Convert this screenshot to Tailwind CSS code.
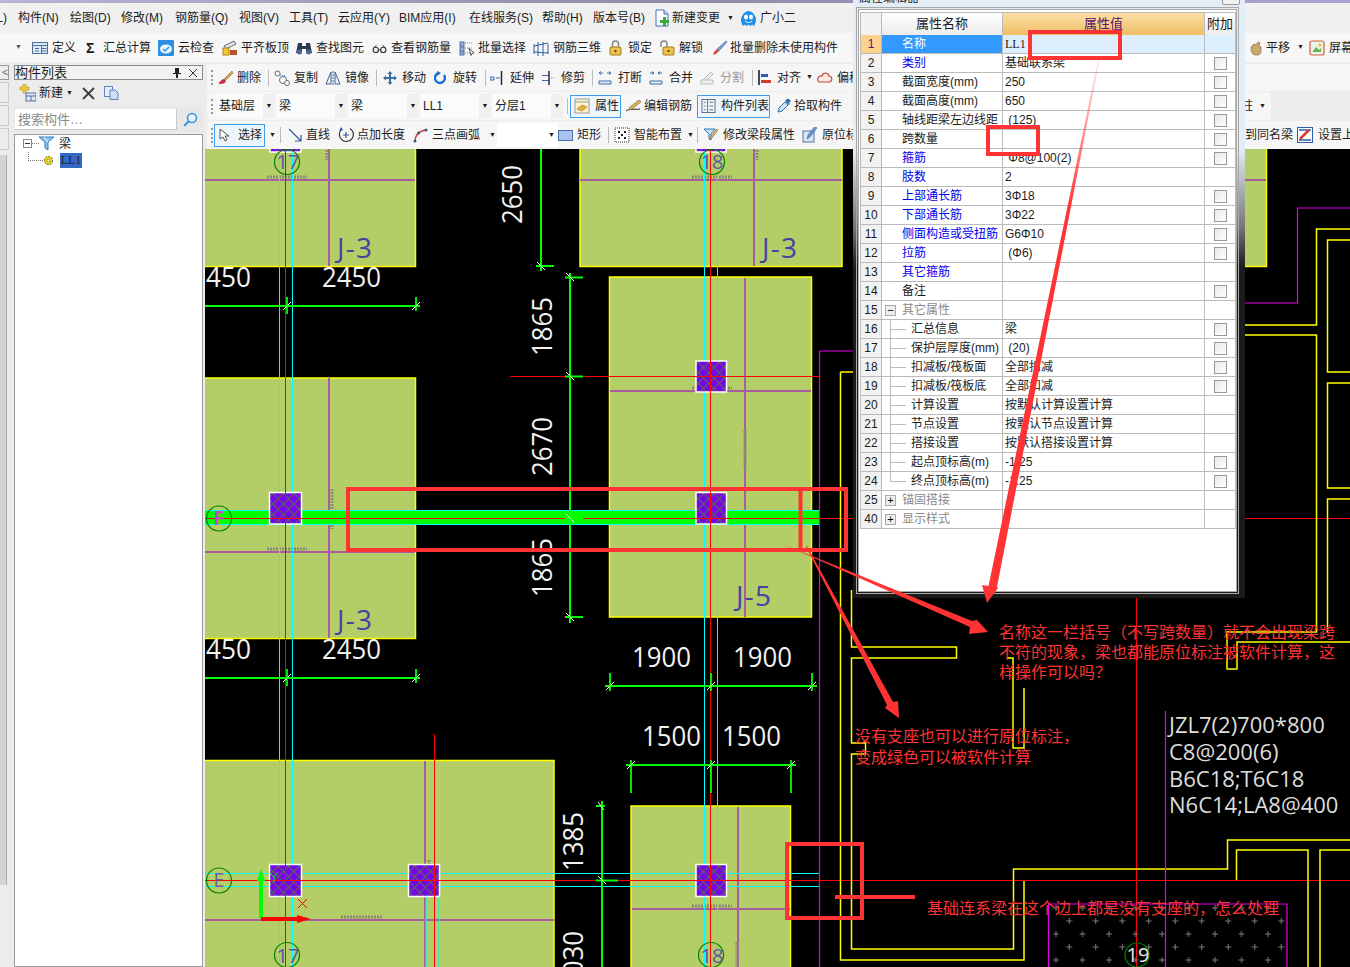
<!DOCTYPE html>
<html lang="zh-CN">
<head>
  <meta charset="UTF-8" />
  <title>构件列表</title>
  <script src="https://cdn.jsdelivr.net/npm/@tailwindcss/browser@4"></script>
</head>
<body class="overflow-hidden">
<div class="relative w-[1350px] h-[967px] overflow-hidden flex flex-col bg-[#ececec] text-[12px] text-[#1c1c1c] whitespace-nowrap font-['Liberation_Sans','Noto_Sans_CJK_SC',sans-serif]">

  <!-- 标题栏残留 -->
  <div class="h-[3px] bg-gradient-to-r from-[#b9b3d6] via-[#8f8aa8] to-[#a9a4d2]"></div>

  <!-- 菜单 -->
  <div class="h-[30px] flex items-center bg-[#f0f0f0] *:shrink-0">
    <span class="w-[7px] mr-[11px] flex justify-end">L)</span>
    <span class="w-[52px]">构件(N)</span>
    <span class="w-[51px]">绘图(D)</span>
    <span class="w-[54px]">修改(M)</span>
    <span class="w-[64px]">钢筋量(Q)</span>
    <span class="w-[50px]">视图(V)</span>
    <span class="w-[49px]">工具(T)</span>
    <span class="w-[61px]">云应用(Y)</span>
    <span class="w-[70px]">BIM应用(I)</span>
    <span class="w-[73px]">在线服务(S)</span>
    <span class="w-[51px]">帮助(H)</span>
    <span class="w-[61px]">版本号(B)</span>
    <svg class="w-[16px] h-[18px] mr-[2px]" viewBox="0 0 16 18"><path d="M2 1h8l4 4v12H2z" fill="#fff" stroke="#3f6fb5"/><path d="M10 1v4h4" fill="#cfe0f5" stroke="#3f6fb5"/><path d="M9 8h3v3h3v3h-3v3H9v-3H6v-3h3z" fill="#3aa83a"/></svg>
    <span class="w-[55px]">新建变更</span>
    <span class="w-[13px] text-[7px]">▼</span>
    <svg class="w-[17px] h-[17px] mr-[3px]" viewBox="0 0 17 17"><path d="M3 16c-2-3-2.500-7-1.500-9C3 3 6 1 8.500 1S14 3 15.500 7c1 2 .5 6-1.500 9l-2-1.500-1.500 1.500-2-1.500-2 1.500-1.500-1.500z" fill="#1e8fe6"/><ellipse cx="6" cy="7" rx="2" ry="2.500" fill="#fff"/><ellipse cx="11" cy="7" rx="2" ry="2.500" fill="#fff"/><path d="M5 11c2 2 5 2 7 0" stroke="#fff" fill="none"/></svg>
    <span>广小二</span>
  </div>

  <!-- 工具栏一 -->
  <div class="h-[29px] flex items-center bg-[#f7f7f7] *:shrink-0">
    <span class="w-[32px] pl-[15px] text-[7px] text-[#555]">▼</span>
    <div class="w-[54px] flex items-center gap-1"><svg class="w-4 h-4" viewBox="0 0 16 16"><rect x=".5" y="2.500" width="15" height="11" fill="#dfe9f7" stroke="#4f719e"/><path d="M1 5.500h14M9.500 5.500v8M9.500 8.500h5M9.500 11h5M3 8.500h4M3 11h4" stroke="#4f719e"/></svg><span>定义</span></div>
    <div class="w-[72px] flex items-center gap-[7px]"><span class="w-[10px] text-[14px] font-bold leading-none">Σ</span><span>汇总计算</span></div>
    <div class="w-[64px] flex items-center gap-1"><svg class="w-4 h-4" viewBox="0 0 16 16"><rect width="16" height="16" rx="1" fill="#2d8fe3"/><ellipse cx="8" cy="9" rx="6" ry="4.500" fill="#eaf5ff"/><path d="M5 9l2 2 4-4" stroke="#2d8fe3" stroke-width="1.500" fill="none"/></svg><span>云检查</span></div>
    <div class="w-[74px] flex items-center gap-[3px]"><svg class="w-4 h-4" viewBox="0 0 16 16"><path d="M2 6l10-5 2 3L4 9z" fill="#dfe4ea" stroke="#667"/><rect x="1" y="8" width="6" height="7" fill="#f2c93a" stroke="#a8811a"/><rect x="8" y="10" width="7" height="5" fill="#b5532a"/></svg><span>平齐板顶</span></div>
    <div class="w-[76px] flex items-center gap-1"><svg class="w-4 h-4" viewBox="0 0 16 16"><path d="M2 3h4v3h4V3h4l2 10h-6V9H6v4H0z" fill="#2c3a52"/><circle cx="3.500" cy="12" r="2.500" fill="#4e6a94"/><circle cx="12.500" cy="12" r="2.500" fill="#4e6a94"/></svg><span>查找图元</span></div>
    <div class="w-[87px] flex items-center gap-[4px]"><svg class="w-[15px] h-4" viewBox="0 0 16 16"><circle cx="4" cy="10" r="2.800" fill="none" stroke="#333" stroke-width="1.200"/><circle cx="12" cy="10" r="2.800" fill="none" stroke="#333" stroke-width="1.200"/><path d="M7 10h2M1.500 8L5 5M14.500 8L11 5" stroke="#333"/></svg><span>查看钢筋量</span></div>
    <div class="w-[74px] flex items-center gap-[3px]"><svg class="w-4 h-4" viewBox="0 0 16 16"><rect x="1" y="2" width="4" height="4" fill="#9bb6db" stroke="#4f719e"/><rect x="1" y="7" width="4" height="4" fill="#9bb6db" stroke="#4f719e"/><rect x="1" y="12" width="4" height="3" fill="#9bb6db" stroke="#4f719e"/><path d="M6 3h8M6 8h8M6 13h5" stroke="#888" stroke-dasharray="1 1"/><path d="M10 8l5 5-2 .5-1 2z" fill="#fff" stroke="#555"/></svg><span>批量选择</span></div>
    <div class="w-[76px] flex items-center gap-1"><svg class="w-4 h-4" viewBox="0 0 16 16"><path d="M1 4v10M5 2v14M10 2v14M15 4v10M1 6l14-3M1 12l14 1" stroke="#2e5d9e" fill="none"/></svg><span>钢筋三维</span></div>
    <div class="w-[51px] flex items-center gap-[6px]"><svg class="w-[13px] h-4" viewBox="0 0 13 16"><path d="M3.500 7V4a3 3 0 016 0v3" fill="none" stroke="#888" stroke-width="1.500"/><rect x="1" y="7" width="11" height="8" rx="1" fill="#f0c24a" stroke="#a07c1c"/><circle cx="6.500" cy="11" r="1.200" fill="#6a4f0c"/></svg><span>锁定</span></div>
    <div class="w-[52px] flex items-center gap-[4px]"><svg class="w-[15px] h-4" viewBox="0 0 15 16"><path d="M1 7V4a3 3 0 016 0v3" fill="none" stroke="#888" stroke-width="1.500"/><rect x="3" y="7" width="11" height="8" rx="1" fill="#f0c24a" stroke="#a07c1c"/><circle cx="8.500" cy="11" r="1.200" fill="#6a4f0c"/></svg><span>解锁</span></div>
    <div class="w-[536px] flex items-center gap-[2px]"><svg class="w-4 h-4" viewBox="0 0 16 16"><path d="M14 1l1 1-8 9-2-2z" fill="#7da2d6" stroke="#3e5f91" stroke-width=".6"/><path d="M5 9l2 2-3 3-3 1 1-3z" fill="#e0473c"/></svg><span>批量删除未使用构件</span></div>
    <div class="w-[61px] flex items-center gap-[2px]"><svg class="w-4 h-4" viewBox="0 0 16 16"><path d="M3 9c0-3 2-5 4-5l1 1 2-3 2 1-1 3 2 1v5c0 2-2 3-4 3H7c-2 0-4-3-4-6z" fill="#c9a86a" stroke="#7a6232" stroke-width=".6"/></svg><span>平移</span><span class="ml-[5px] text-[7px]">▼</span></div>
    <div class="flex items-center gap-1"><svg class="w-4 h-4" viewBox="0 0 16 16"><rect x="1" y="1" width="14" height="14" rx="2" fill="#e9f4ea" stroke="#d35a3d" stroke-width="1.200"/><path d="M4 11l3-4 3 3 2-2v4H4z" fill="#68b04a"/><circle cx="11" cy="5" r="1.500" fill="#f2b62d"/></svg><span>屏幕</span></div>
  </div>

  <div class="flex-1 flex">
    <!-- 左侧 -->
    <div class="w-[205px] flex">
      <div class="w-[11px] flex flex-col text-[#666]">
        <div class="mt-[3px] h-[15px] w-[9px] border-y border-r border-[#999] flex items-center justify-end text-[10px]">&lt;</div>
        <div class="mt-[2px] h-[21px] w-[9px] border-y border-r border-[#ccc]"></div>
        <div class="mt-[2px] h-[21px] w-[9px] border-y border-r border-[#ccc]"></div>
        <div class="mt-[2px] h-[22px] w-[9px] border-y border-r border-[#ccc]"></div>
        <div class="mt-[5px] h-[730px] w-[7px] bg-[#d4d4d4] border-r border-[#aaa]"></div>
      </div>
      <div class="ml-[3px] w-[189px] flex flex-col">
        <div class="mt-[3px] h-[15px] flex items-center justify-between pr-[5px] border border-[#8a8a8a] bg-[#f2f2f2] text-[13px] leading-[12px]">
          <span>构件列表</span>
          <span class="flex items-center gap-[8px]">
            <svg class="w-[8px] h-[10px]" viewBox="0 0 8 10"><path d="M2 0h4v5h2v1H5v4H3V6H0V5h2z" fill="#222"/></svg>
            <svg class="w-[8px] h-[8px]" viewBox="0 0 8 8"><path d="M0 0l8 8M8 0L0 8" stroke="#333"/></svg>
          </span>
        </div>
        <div class="h-[26px] flex items-center pl-[5px]">
          <svg class="w-[17px] h-[18px]" viewBox="0 0 17 18"><path d="M4 0h3v3h3v3H7v3H4V6H1V3h3z" fill="#eec93a" stroke="#a88a1a" stroke-width=".5"/><rect x="7" y="9" width="10" height="8" fill="#dfe9f7" stroke="#4f719e"/><path d="M7 12h10M12 12v5" stroke="#4f719e"/></svg>
          <span class="ml-[3px]">新建</span>
          <span class="ml-[3px] text-[7px]">▼</span>
          <svg class="ml-[9px] w-[13px] h-[13px]" viewBox="0 0 13 13"><path d="M1 1l11 11M12 1L1 12" stroke="#3c3c3c" stroke-width="1.800"/></svg>
          <svg class="ml-[9px] w-[15px] h-[14px]" viewBox="0 0 15 14"><rect x=".5" y=".5" width="8" height="10" fill="#e6eefa" stroke="#5e86bd"/><path d="M6 4h5l3 3v6.500H6z" fill="#cfdff5" stroke="#5e86bd"/></svg>
        </div>
        <div class="h-[26px] flex items-center bg-[#e8e8e8] pl-[1px]">
          <div class="w-[162px] h-[21px] bg-white border-b border-r border-[#c8c8c8] text-[13px] leading-[21px] pl-[3px] text-[#8a8a8a]">搜索构件…</div>
          <svg class="ml-[6px] w-[15px] h-[15px]" viewBox="0 0 15 15"><circle cx="9" cy="6" r="4.500" fill="#e6f3ff" stroke="#3b97dd" stroke-width="1.600"/><path d="M6 9l-5 5" stroke="#3b97dd" stroke-width="2"/></svg>
        </div>
        <div class="mt-[2px] flex-1 bg-white border border-[#999] pl-[8px]">
          <div class="h-[17px] flex items-center">
            <span class="w-[9px] h-[9px] border border-[#8a8a8a] flex items-center justify-center"><i class="block w-[5px] h-px bg-[#333]"></i></span>
            <span class="w-[7px] border-t border-dotted border-[#777]"></span>
            <svg class="w-[15px] h-[15px]" viewBox="0 0 15 15"><path d="M0 1h15L9 6v8L6 12V6z" fill="#8fc3ee" stroke="#2e7fc2"/><path d="M5 1l4 5" stroke="#fff"/></svg>
            <span class="ml-[5px]">梁</span>
          </div>
          <div class="h-[17px] flex items-center pl-[5px]">
            <span class="w-[15px] h-[9px] -mt-[9px] border-l border-b border-dotted border-[#777]"></span>
            <svg class="w-[11px] h-[11px]" viewBox="0 0 11 11"><circle cx="5.500" cy="5.500" r="4" fill="#f4e21c" stroke="#4a4a10" stroke-dasharray="2 1"/><circle cx="5.500" cy="5.500" r="1.500" fill="#fff" stroke="#4a4a10" stroke-width=".6"/></svg>
            <span class="ml-[6px] w-[22px] h-[15px] bg-[#316ac5] text-center leading-[15px] font-['Liberation_Serif',serif]">LL1</span>
          </div>
        </div>
      </div>
    </div>

    <!-- 右侧 -->
    <div class="w-[1145px] flex flex-col">
      <!-- 编辑工具 -->
      <div class="mt-[2px] ml-[2px] h-[27px] pl-[4px] flex items-center bg-[#f6f6f6] rounded-l-[3px] *:shrink-0">
        <i class="w-[2px] h-[15px] mr-[4px] border-l-2 border-dotted border-[#999]"></i>
        <div class="w-[51px] flex items-center gap-1"><svg class="w-4 h-4" viewBox="0 0 16 16"><path d="M15 1l-8 8 1 2 8-8z" fill="#d6a258" stroke="#7a5626" stroke-width=".5"/><path d="M7 9c-3 0-3 3-6 4 3 2 7 1 8-2z" fill="#c8324a"/></svg><span>删除</span></div>
        <i class="w-px h-4 mr-[5px] bg-[#bbb]"></i>
        <div class="w-[51px] flex items-center gap-1"><svg class="w-4 h-4" viewBox="0 0 16 16"><circle cx="3.500" cy="3.500" r="2.500" fill="#fff" stroke="#666"/><circle cx="9" cy="10" r="3.500" fill="#fff" stroke="#666"/><circle cx="13" cy="13" r="2.500" fill="#fff" stroke="#666"/><path d="M6 5l6 1" stroke="#3b7fd0" stroke-dasharray="1 1"/></svg><span>复制</span></div>
        <div class="w-[51px] flex items-center gap-1"><svg class="w-4 h-4" viewBox="0 0 16 16"><path d="M6 2v12H1zM10 2v12h5z" fill="#eef3fa" stroke="#3f5f8a"/><path d="M8 1v14" stroke="#3f5f8a" stroke-dasharray="2 1"/></svg><span>镜像</span></div>
        <i class="w-px h-4 mr-[6px] bg-[#bbb]"></i>
        <div class="w-[51px] flex items-center gap-[5px]"><svg class="w-[14px] h-[14px]" viewBox="0 0 14 14"><path d="M7 0l2.500 3H8v3h3V4.500L14 7l-3 2.500V8H8v3h1.500L7 14l-2.500-3H6V8H3v1.500L0 7l3-2.500V6h3V3H4.500z" fill="#3e6ea8"/></svg><span>移动</span></div>
        <div class="w-[51px] flex items-center gap-[7px]"><svg class="w-[12px] h-[14px]" viewBox="0 0 12 14"><path d="M10 4a5 5 0 11-5-2" fill="none" stroke="#1f6fd0" stroke-width="2.400"/><path d="M3 0l4 2-4 3z" fill="#1f6fd0"/></svg><span>旋转</span></div>
        <i class="w-px h-4 mr-[4px] bg-[#bbb]"></i>
        <div class="w-[52px] flex items-center gap-[7px]"><svg class="w-[13px] h-[14px]" viewBox="0 0 13 14"><path d="M0 6h4v3H0zM6 7h4" stroke="#3e6ea8" fill="#d3e2f5"/><path d="M11.500 0v14" stroke="#222" stroke-width="1.400"/></svg><span>延伸</span></div>
        <div class="w-[50px] flex items-center gap-[6px]"><svg class="w-[13px] h-[14px]" viewBox="0 0 13 14"><path d="M0 4.500h7M0 9.500h7" stroke="#3e6ea8"/><path d="M7 0v14" stroke="#222" stroke-width="1.400"/><path d="M9 7h4" stroke="#888" stroke-dasharray="1 1"/></svg><span>修剪</span></div>
        <i class="w-px h-4 mr-[5px] bg-[#bbb]"></i>
        <div class="w-[51px] flex items-center gap-[6px]"><svg class="w-[14px] h-[14px]" viewBox="0 0 14 14"><path d="M1 10h12v3H1z" fill="#e2ecf8" stroke="#3e6ea8"/><path d="M5 2H1l2-1.500M1 2l2 1.500M9 2h4l-2-1.500M13 2l-2 1.500" stroke="#3e6ea8" fill="none"/></svg><span>打断</span></div>
        <div class="w-[51px] flex items-center gap-[6px]"><svg class="w-[14px] h-[14px]" viewBox="0 0 14 14"><path d="M1 10h12v3H1z" fill="#e2ecf8" stroke="#3e6ea8"/><path d="M1 2h4L3 .5M5 2L3 3.500M13 2H9l2-1.500M9 2l2 1.500" stroke="#3e6ea8" fill="none"/></svg><span>合并</span></div>
        <div class="w-[52px] flex items-center gap-[6px] text-[#9a9a9a]"><svg class="w-[14px] h-[14px]" viewBox="0 0 14 14"><path d="M1 13h12V9H1zM3 9l8-8 2 2-6 6" fill="#eee" stroke="#bbb"/></svg><span>分割</span></div>
        <i class="w-px h-4 mr-[5px] bg-[#bbb]"></i>
        <div class="w-[59px] flex items-center gap-[5px]"><svg class="w-[14px] h-[15px]" viewBox="0 0 14 15"><path d="M1 0v15" stroke="#123" stroke-width="1.600"/><rect x="3" y="4" width="7" height="3" fill="#2a5fb0"/><rect x="3" y="10" width="10" height="3" fill="#d23b2f"/></svg><span>对齐</span><span class="text-[7px]">▼</span></div>
        <div class="flex items-center gap-[4px]"><svg class="w-4 h-4" viewBox="0 0 16 16"><path d="M2 12c-3-3 0-7 3-6 1-4 6-4 7 0 3 0 4 4 1 6z" fill="#fbe9e4" stroke="#c0483a" stroke-width="1.200"/></svg><span>偏移</span></div>
      </div>
      <!-- 选择栏 -->
      <div class="mt-px ml-[2px] h-[28px] w-[1064px] pl-[4px] flex items-center bg-[#f6f6f6] rounded-[3px] *:shrink-0">
        <i class="w-[2px] h-[15px] mr-[4px] border-l-2 border-dotted border-[#999]"></i>
        <div class="w-[46px] h-[24px] pl-[2px] leading-[24px] bg-[#fbfbfb]">基础层</div><div class="w-[12px] h-[24px] mr-[2px] flex items-center justify-center text-[7px] bg-[#f0f0f0]">▼</div>
        <div class="w-[58px] h-[24px] pl-[2px] leading-[24px] bg-[#fbfbfb]">梁</div><div class="w-[12px] h-[24px] mr-[2px] flex items-center justify-center text-[7px] bg-[#f0f0f0]">▼</div>
        <div class="w-[58px] h-[24px] pl-[2px] leading-[24px] bg-[#fbfbfb]">梁</div><div class="w-[12px] h-[24px] mr-[2px] flex items-center justify-center text-[7px] bg-[#f0f0f0]">▼</div>
        <div class="w-[58px] h-[24px] pl-[2px] leading-[24px] bg-[#fbfbfb]">LL1</div><div class="w-[12px] h-[24px] mr-[2px] flex items-center justify-center text-[7px] bg-[#f0f0f0]">▼</div>
        <div class="w-[58px] h-[24px] pl-[2px] leading-[24px] bg-[#fbfbfb]">分层1</div><div class="w-[12px] h-[24px] mr-[4px] flex items-center justify-center text-[7px] bg-[#f0f0f0]">▼</div>
        <i class="w-px h-4 mr-[2px] bg-[#bbb]"></i>
        <div class="w-[51px] h-[23px] mr-[4px] flex items-center gap-[5px] pl-[3px] border border-[#3d9ef0] bg-[#edf5fd]"><svg class="w-4 h-4" viewBox="0 0 16 16"><rect x="1" y="1" width="14" height="14" fill="#fff3d0" stroke="#999"/><path d="M1 4h14" stroke="#999"/><path d="M3 11l5-4 5 2-5 4z" fill="#eab23c" stroke="#a6761a" stroke-width=".6"/></svg><span>属性</span></div>
        <div class="w-[72px] flex items-center gap-[3px]"><svg class="w-4 h-4" viewBox="0 0 16 16"><path d="M1 13c4-3 8-1 14-2" stroke="#222" fill="none"/><path d="M14 2l2 2-9 7-3 1 1-3z" fill="#e2b061" stroke="#7a5626" stroke-width=".6"/></svg><span>编辑钢筋</span></div>
        <div class="w-[73px] h-[23px] mr-[6px] flex items-center gap-[5px] pl-[3px] border border-[#3d9ef0] bg-[#edf5fd]"><svg class="w-4 h-4" viewBox="0 0 16 16"><rect x="1" y="1" width="14" height="14" fill="none" stroke="#667"/><path d="M7 1v14M3 4h2M3 8h2M3 12h2M9 4h4M9 8h4M9 12h4" stroke="#667"/></svg><span>构件列表</span></div>
        <div class="flex items-center gap-[2px]"><svg class="w-4 h-4" viewBox="0 0 16 16"><path d="M2 14l1-4 6-6 3 3-6 6z" fill="#cfe4f7" stroke="#2e6fb0"/><path d="M9 3l2-2c1-1 3 1 4 2l-2 2 1 1-1 1-4-4z" fill="#2e6fb0"/></svg><span>拾取构件</span></div>
        <div class="ml-auto mr-[5px] flex items-center gap-[6px]"><span>柱</span><span class="text-[7px]">▼</span></div>
      </div>
      <!-- 绘图工具 -->
      <div class="mt-px ml-[2px] h-[28px] pl-[4px] flex items-center bg-[#f6f6f6] rounded-l-[3px] *:shrink-0">
        <i class="w-[2px] h-[15px] mr-px border-l-2 border-dotted border-[#999]"></i>
        <div class="w-[51px] h-[23px] flex items-center gap-[7px] pl-[4px] border border-[#3d9ef0] bg-[#edf5fd]"><svg class="w-[12px] h-[14px]" viewBox="0 0 12 14"><path d="M1 1v10l3-2 2 4 2-1-2-4h4z" fill="#fff" stroke="#555"/></svg><span>选择</span></div>
        <div class="w-[15px] text-center text-[7px]">▼</div>
        <i class="w-px h-4 mr-[6px] bg-[#bbb]"></i>
        <div class="w-[51px] flex items-center gap-[3px]"><svg class="w-4 h-4" viewBox="0 0 16 16"><path d="M2 2l12 12M14 8v6H8" stroke="#2b5c96" stroke-width="1.200" fill="none"/></svg><span>直线</span></div>
        <div class="w-[75px] flex items-center gap-[3px]"><svg class="w-4 h-4" viewBox="0 0 16 16"><path d="M4 2a7 7 0 108-.5" stroke="#333" stroke-width="1.200" fill="none"/><path d="M3 0l2 3-3.500.5z" fill="#2b5c96"/><path d="M8 5v6M5 8h6" stroke="#2b5c96" stroke-width="1.200"/></svg><span>点加长度</span></div>
        <div class="w-[84px] flex items-center gap-[3px]"><svg class="w-4 h-4" viewBox="0 0 16 16"><path d="M2 15c0-7 4-11 11-12" stroke="#d0492f" stroke-width="1.400" fill="none"/><circle cx="2" cy="14" r="1.500" fill="#2b5c96"/><circle cx="5.500" cy="6" r="1.500" fill="#2b5c96"/><circle cx="13" cy="3" r="1.500" fill="#2b5c96"/></svg><span>三点画弧</span><span class="ml-[6px] text-[7px]">▼</span></div>
        <div class="w-[61px] h-[24px] flex items-center justify-end pr-[3px] text-[7px] bg-white">▼</div>
        <div class="w-[50px] flex items-center gap-[4px]"><svg class="w-[15px] h-[11px]" viewBox="0 0 15 11"><rect x=".5" y=".5" width="14" height="10" fill="#a9c3ec" stroke="#4a6fae"/></svg><span>矩形</span></div>
        <i class="w-px h-4 mr-[5px] bg-[#bbb]"></i>
        <div class="w-[83px] flex items-center gap-[4px]"><svg class="w-4 h-4" viewBox="0 0 16 16"><rect x="1" y="1" width="14" height="14" fill="#fff" stroke="#333" stroke-dasharray="1 1"/><path d="M4 4h2v2H4zM10 4h2v2h-2zM7 7h2v2H7zM4 10h2v2H4zM10 10h2v2h-2z" fill="#222"/></svg><span>智能布置</span><span class="ml-px text-[7px]">▼</span></div>
        <i class="w-px h-4 mr-[5px] bg-[#bbb]"></i>
        <div class="w-[99px] flex items-center gap-[4px]"><svg class="w-4 h-4" viewBox="0 0 16 16"><path d="M1 2h11L8 7v6L6 12V7z" fill="#bfe0f5" stroke="#2e7fb2"/><path d="M15 3l-6 8-2 1 .5-2 6-8z" fill="#e2b061" stroke="#7a5626" stroke-width=".5"/></svg><span>修改梁段属性</span></div>
        <div class="w-[443px] flex items-center gap-[4px]"><svg class="w-4 h-4" viewBox="0 0 16 16"><rect x="1" y="4" width="11" height="11" fill="#dbe6f5" stroke="#4f719e"/><path d="M15 1l-7 9-3 2 1-4 7-9z" fill="#6a94cf" stroke="#3e5f91" stroke-width=".5"/></svg><span>原位标注</span></div>
        <div class="w-[52px]">到同名梁</div>
        <div class="flex items-center gap-[5px]"><svg class="w-4 h-4" viewBox="0 0 16 16"><rect x=".5" y=".5" width="15" height="15" fill="#fff" stroke="#2a5fa8"/><path d="M2 3h12M2 13h12" stroke="#2a5fa8" stroke-width="1.500"/><path d="M3 12L12 3" stroke="#d8382f" stroke-width="2.500"/></svg><span>设置上</span></div>
      </div>

      <!-- 绘图区 -->
      <svg class="block w-[1145px] h-[818px] bg-black" viewBox="205 149 1145 818">
        <defs>
          <pattern id="hatch" patternUnits="userSpaceOnUse" width="10.500" height="10.500">
            <rect width="10.500" height="10.500" fill="#7a00f0"/>
            <path d="M0 0l10.500 10.500M10.500 0L0 10.500" stroke="#4c7a36" stroke-width="1"/>
          </pattern>
          <pattern id="plus" patternUnits="userSpaceOnUse" x="1056" y="915" width="26.500" height="26">
            <path d="M13.250 3v6M10.250 6h6M0 16v6M-3 19h6M26.500 16v6M23.500 19h6" stroke="#7c7c7c" fill="none"/>
          </pattern>
        </defs>

        <!-- 独立基础 -->
        <g fill="#b3cd67" stroke="#ffff00" stroke-width="1.500">
          <rect x="204" y="140" width="211.500" height="126.500"/>
          <rect x="580" y="140" width="262" height="126.500"/>
          <rect x="1200" y="140" width="66.500" height="126.500"/>
          <rect x="204" y="378" width="211.500" height="260.500"/>
          <rect x="609.500" y="277" width="202" height="340"/>
          <rect x="204" y="760.500" width="350" height="220"/>
          <rect x="631" y="806" width="159.500" height="170"/>
        </g>
        <g stroke="#aa5ca0" stroke-width="2" fill="none">
          <path d="M205 180h210M329 149v117"/>
          <path d="M580 180h262M754 149v117M1200 180h66"/>
          <path d="M205 552h210M329 378v260"/>
          <path d="M610 391h201M745 278v339"/>
          <path d="M205 920h349M425 761v206"/>
          <path d="M632 909h158M738 807v160"/>
        </g>
        <!-- 小字标注 -->
        <g stroke="#8b8b78" stroke-width="3" stroke-dasharray="2 1" fill="none">
          <path d="M267 177h40M692 177h40M267 549h40M692 388h40M341 917h42M692 906h40"/>
          <path d="M327 150v10M757 150v10M332 489v40M745 430v40M429 860v30M737 942v25"/>
        </g>

        <!-- 连系梁 -->
        <rect x="205" y="511" width="614" height="13" fill="#00ff00"/>
        <path d="M205 510.500h614M205 524.500h614" stroke="#00ffff"/>

        <!-- 轴线 -->
        <g stroke="#00ffff" fill="none">
          <path d="M279.500 149v818M292.500 149v818M704.500 149v818M717.500 149v818"/>
          <path d="M205 873.500h614M205 886.500h614"/>
          <path d="M426 897v70M439 897v70"/>
        </g>
        <!-- 柱 -->
        <g fill="url(#hatch)" stroke="#ffffff" stroke-width="1.500">
          <rect x="270" y="140" width="31" height="12"/>
          <rect x="696" y="140" width="30" height="12"/>
          <rect x="269.500" y="492.500" width="32" height="31.500"/>
          <rect x="696" y="361" width="30.500" height="31"/>
          <rect x="696" y="492.500" width="30.500" height="31.500"/>
          <rect x="269.500" y="864.500" width="32" height="32"/>
          <rect x="408.500" y="864.500" width="31" height="32"/>
          <rect x="696" y="864.500" width="30.500" height="32"/>
        </g>
        <g stroke="#ff0000" fill="none">
          <path d="M285.500 149v818M710.500 149v818M434.500 734v233M1136.500 597v370"/>
          <path d="M205 518.500h1145M205 880.500h1145M510 376.500h310"/>
        </g>

        <!-- 基础外围线 -->
        <g stroke="#ffff00" stroke-width="1.500" fill="none">
          <path d="M840.500 372h20M840.500 372v588h183.500v-79"/>
          <path d="M851.500 590v57h105v11h-105v85h14v11h-14v195h162v-80h214v-29h125"/>
          <path d="M1007 658h6v90h11v-60"/>
          <path d="M1236.500 880v-30h71.500v120M1320 970V850h35"/>
          <path d="M1240 325h76.500v-96h40M1240 335h76.500v297h-89.500v37h10v-27h120"/>
          <path d="M1350 240h-22.500v132h30M1350 383h-22.500v105h30M1350 499h-22.500v133"/>
        </g>
        <g stroke="#e600e6" stroke-width="1.200" fill="none">
          <path d="M819.500 351v620M819.500 351h40"/>
          <path d="M1240 303h57.500v-95h60"/>
          <path d="M1165.500 711v260"/>
          <path d="M1048.500 970v-66h238.500v66"/>
        </g>
        <rect x="1049" y="905" width="237" height="62" fill="url(#plus)"/>

        <!-- 尺寸线 -->
        <g stroke="#00ff00" stroke-width="2" fill="none">
          <path d="M541 149v122M570 273v350M205 306h215M205 678h215M605 686h212M626 765h170M602 801v166"/>
          <path d="M536 266h18M565 277.500h18M565 376.500h18M565 518h18M565 617h18M596 806h9M596 880.500h22"/>
          <path stroke-width="1.800" d="M287 297v17M416 297v14M287 669v17M416 669v14M610 673v18M711 673v18M812 673v18M631 760v33M711 760v33M791 760v33"/>
        </g>
        <g stroke="#ffffff" fill="none">
          <path d="M537 262l8 8M566 273l8 8M566 372l8 8M566 514l8 8M566 613l8 8M598 802l6 8M598 876l8 8"/>
          <path d="M283 310l8-8M412 310l8-8M283 682l8-8M412 682l8-8M606 690l8-8M707 690l8-8M808 690l8-8M627 769l8-8M707 769l8-8M787 769l8-8"/>
        </g>

        <!-- 轴号 -->
        <g stroke="#008000" stroke-width="1.200" fill="none">
          <circle cx="287" cy="162" r="12.500"/><circle cx="712" cy="162" r="12.500"/>
          <circle cx="219" cy="518.500" r="12.500"/><circle cx="219" cy="880.500" r="12.500"/>
          <circle cx="287" cy="955" r="12.500"/><circle cx="711" cy="955" r="12.500"/>
          <circle cx="1137" cy="955" r="12"/>
        </g>
        <g fill="#5a55a8" font-family="Open Sans" font-size="20" text-anchor="middle">
          <text x="288" y="169">17</text><text x="712" y="169">18</text>
          <text x="219" y="887" fill="#6d62a0">E</text>
          <text x="288" y="963">17</text><text x="712" y="963">18</text>
        </g>
        <text x="219" y="525" font-family="Open Sans" font-size="20" text-anchor="middle" fill="#c04fc0" font-weight="700">F</text>
        <text x="1138" y="962" font-family="Open Sans" font-size="20" text-anchor="middle" fill="#e8e8e8">19</text>

        <g fill="#4b3fa3" font-family="Open Sans" font-size="28">
          <text x="337" y="258" textLength="35" lengthAdjust="spacing">J-3</text><text x="762" y="258" textLength="35" lengthAdjust="spacing">J-3</text>
          <text x="337" y="630" textLength="35" lengthAdjust="spacing">J-3</text><text x="736" y="606" textLength="35" lengthAdjust="spacing">J-5</text>
        </g>

        <!-- 尺寸文字 -->
        <g fill="#f2f2f2" font-family="Open Sans" font-size="28">
          <text x="206" y="287" textLength="45" lengthAdjust="spacingAndGlyphs">450</text>
          <text x="322" y="287" textLength="59" lengthAdjust="spacingAndGlyphs">2450</text>
          <text x="206" y="659" textLength="45" lengthAdjust="spacingAndGlyphs">450</text>
          <text x="322" y="659" textLength="59" lengthAdjust="spacingAndGlyphs">2450</text>
          <text x="632" y="667" textLength="59" lengthAdjust="spacingAndGlyphs">1900</text>
          <text x="733" y="667" textLength="59" lengthAdjust="spacingAndGlyphs">1900</text>
          <text x="642" y="746" textLength="59" lengthAdjust="spacingAndGlyphs">1500</text>
          <text x="722" y="746" textLength="59" lengthAdjust="spacingAndGlyphs">1500</text>
          <text transform="translate(522,224) rotate(-90)" textLength="59" lengthAdjust="spacingAndGlyphs">2650</text>
          <text transform="translate(552,356) rotate(-90)" textLength="59" lengthAdjust="spacingAndGlyphs">1865</text>
          <text transform="translate(552,476) rotate(-90)" textLength="59" lengthAdjust="spacingAndGlyphs">2670</text>
          <text transform="translate(552,597) rotate(-90)" textLength="59" lengthAdjust="spacingAndGlyphs">1865</text>
          <text transform="translate(583,871) rotate(-90)" textLength="59" lengthAdjust="spacingAndGlyphs">1385</text>
          <text transform="translate(583,990) rotate(-90)" textLength="59" lengthAdjust="spacingAndGlyphs">2030</text>
        </g>
        <g fill="#dddddd" font-family="Open Sans" font-size="22">
          <text x="1169" y="733">JZL7(2)700*800</text>
          <text x="1169" y="760">C8@200(6)</text>
          <text x="1169" y="787">B6C18;T6C18</text>
          <text x="1169" y="813">N6C14;LA8@400</text>
        </g>

        <!-- 坐标轴 -->
        <path d="M261 918v-40" stroke="#00ff00" stroke-width="4"/>
        <path d="M257 881l4-12 4 12z" fill="#00ff00"/>
        <path d="M261 919h36" stroke="#ff0000" stroke-width="4"/>
        <path d="M297 915l14 4-14 4z" fill="#ff0000"/>
        <path d="M298 899l9 9M307 899l-9 9" stroke="#ff0000"/>
        <path d="M270 873l4 4 4-5M274 877v5" stroke="#00ff00" fill="none"/>
      </svg>
    </div>
  </div>

  <!-- 属性编辑器 -->
  <div class="absolute z-10 top-0 left-[853px] w-[392px] h-[598px] overflow-hidden bg-gradient-to-b from-[#e3edf7] from-[25%] via-[#777] via-[38%] to-[#1a1a1a] to-[45%]">
    <span class="absolute top-[-11px] left-[6px] text-[12px]">属性编辑器</span>
    <div class="absolute top-[-10px] right-[5px] w-[18px] h-[15px] bg-[#f2f2f2] border border-[#999] rounded-[2px]"></div>
    <div class="mt-[7px] ml-[3px] w-[383px] h-[587px] border border-[#a8a8a8] p-px">
      <div class="h-full border border-[#a8a8a8] bg-white pl-px pt-[2px]">
        <div class="w-[376px] border-l border-t border-[#bbb]">
          <div class="grid grid-cols-[21px_121px_202px_31px] h-[22px] leading-[22px] text-center text-[13px]">
            <div class="border-r border-b border-[#bbb] bg-[#f2f2f2]"></div>
            <div class="border-r border-b border-[#bbb] bg-gradient-to-b from-white to-[#ececec]">属性名称</div>
            <div class="border-r border-b border-[#bbb] bg-gradient-to-b from-[#fbdfa6] to-[#f0be63] text-[#5b1070]">属性值</div>
            <div class="border-r border-b border-[#bbb] bg-gradient-to-b from-white to-[#ececec]">附加</div>
          </div>
          <div id="rows"></div>
        </div>
      </div>
    </div>
  </div>

  <!-- 红色批注 -->
  <svg class="absolute z-20 inset-0 w-[1350px] h-[967px] pointer-events-none" viewBox="0 0 1350 967">
    <defs>
      <linearGradient id="fade" gradientUnits="userSpaceOnUse" x1="0" y1="60" x2="0" y2="210">
        <stop offset="0" stop-color="#ff3333" stop-opacity=".1"/>
        <stop offset="1" stop-color="#ff3333"/>
      </linearGradient>
    </defs>
    <g fill="none" stroke="#ff3333" stroke-width="4">
      <rect x="1030" y="32" width="90" height="26"/>
      <rect x="988" y="127" width="50" height="27"/>
      <rect x="348" y="489" width="498" height="61"/>
      <path d="M800.500 489v61"/>
      <rect x="787" y="844" width="75" height="74"/>
      <path d="M835 897h80"/>
    </g>
    <polygon points="1098,60 1099.500,60 997,587 998,588 987,603 982,585 988.500,586" fill="url(#fade)"/>
    <polygon points="780,543 972,621 977,620 988,632 969,634 970,627" fill="#ff3333"/>
    <polygon points="806,547 807,546 893,702 898,701 899,718 885,708 887,705" fill="#ff3333"/>
    <g fill="#ff3333" font-size="16" font-family="Noto Sans CJK SC">
      <text x="999" y="638">名称这一栏括号（不写跨数量）就不会出现梁跨</text>
      <text x="999" y="658">不符的现象，梁也都能原位标注被软件计算，这</text>
      <text x="999" y="678">样操作可以吗？</text>
      <text x="855" y="742">没有支座也可以进行原位标注，</text>
      <text x="855" y="763">变成绿色可以被软件计算</text>
      <text x="927" y="914">基础连系梁在这个边上都是没有支座的，怎么处理</text>
    </g>
  </svg>
</div>

<script>
// 属性表
const rows = [
  ['1', '名称', 'LL1', 'sel'],
  ['2', '类别', '基础联系梁', 'link', 1],
  ['3', '截面宽度(mm)', '250', '', 1],
  ['4', '截面高度(mm)', '650', '', 1],
  ['5', '轴线距梁左边线距', ' (125)', '', 1],
  ['6', '跨数量', '', '', 1],
  ['7', '箍筋', ' Φ8@100(2)', 'link', 1],
  ['8', '肢数', '2', 'link'],
  ['9', '上部通长筋', '3Φ18', 'link', 1],
  ['10', '下部通长筋', '3Φ22', 'link', 1],
  ['11', '侧面构造或受扭筋', 'G6Φ10', 'link', 1],
  ['12', '拉筋', ' (Φ6)', 'link', 1],
  ['13', '其它箍筋', '', 'link'],
  ['14', '备注', '', '', 1],
  ['15', '其它属性', '', 'minus'],
  ['16', '汇总信息', '梁', 'child', 1],
  ['17', '保护层厚度(mm)', ' (20)', 'child', 1],
  ['18', '扣减板/筏板面', '全部扣减', 'child', 1],
  ['19', '扣减板/筏板底', '全部扣减', 'child', 1],
  ['20', '计算设置', '按默认计算设置计算', 'child'],
  ['21', '节点设置', '按默认节点设置计算', 'child'],
  ['22', '搭接设置', '按默认搭接设置计算', 'child'],
  ['23', '起点顶标高(m)', '-1.25', 'child', 1],
  ['24', '终点顶标高(m)', '-1.25', 'last', 1],
  ['25', '锚固搭接', '', 'plus'],
  ['40', '显示样式', '', 'plus']
];

document.getElementById('rows').innerHTML = rows.map(([no, name, value, kind, check]) => {
  const sel = kind === 'sel';
  const group = kind === 'plus' || kind === 'minus';
  const child = kind === 'child' || kind === 'last';
  const box = group
    ? `<span class="absolute left-[3px] top-[4px] w-[11px] h-[11px] border border-[#aaa] bg-[#eee] flex items-center justify-center text-black text-[11px] leading-none">${kind === 'plus' ? '+' : '−'}</span>`
    : '';
  const tree = child
    ? `<i class="absolute left-[8px] top-0 ${kind === 'last' ? 'h-[10px]' : 'h-full'} border-l border-[#bbb]"></i><i class="absolute left-[8px] top-[9px] w-[16px] border-t border-[#bbb]"></i>`
    : '';
  const nameColor = sel ? 'bg-[#3399ff] text-white' : kind === 'link' ? 'text-[#0000ee]' : group ? 'text-[#8a8a8a]' : '';
  return `<div class="grid grid-cols-[21px_121px_202px_31px] h-[19px] leading-[18px]">
    <div class="border-r border-b border-[#bbb] text-center ${sel ? 'bg-[#fcd38d] text-[#6a0f7a]' : 'bg-[#f2f2f2]'}">${no}</div>
    <div class="relative border-r border-b border-[#bbb] ${child ? 'pl-[29px]' : 'pl-[20px]'} ${nameColor}">${box}${tree}${name}</div>
    <div class="border-r border-b border-[#bbb] pl-[2px] whitespace-pre ${sel ? 'bg-[#ddeeff] font-[\'Liberation_Serif\',serif]' : ''}">${value}</div>
    <div class="border-r border-b border-[#bbb] flex items-center justify-center ${sel ? 'bg-[#ddeeff]' : ''}">${check ? '<i class="block w-[13px] h-[13px] border border-[#999] bg-gradient-to-br from-[#e8e8e8] to-white"></i>' : ''}</div>
  </div>`;
}).join('');
</script>
</body>
</html>
